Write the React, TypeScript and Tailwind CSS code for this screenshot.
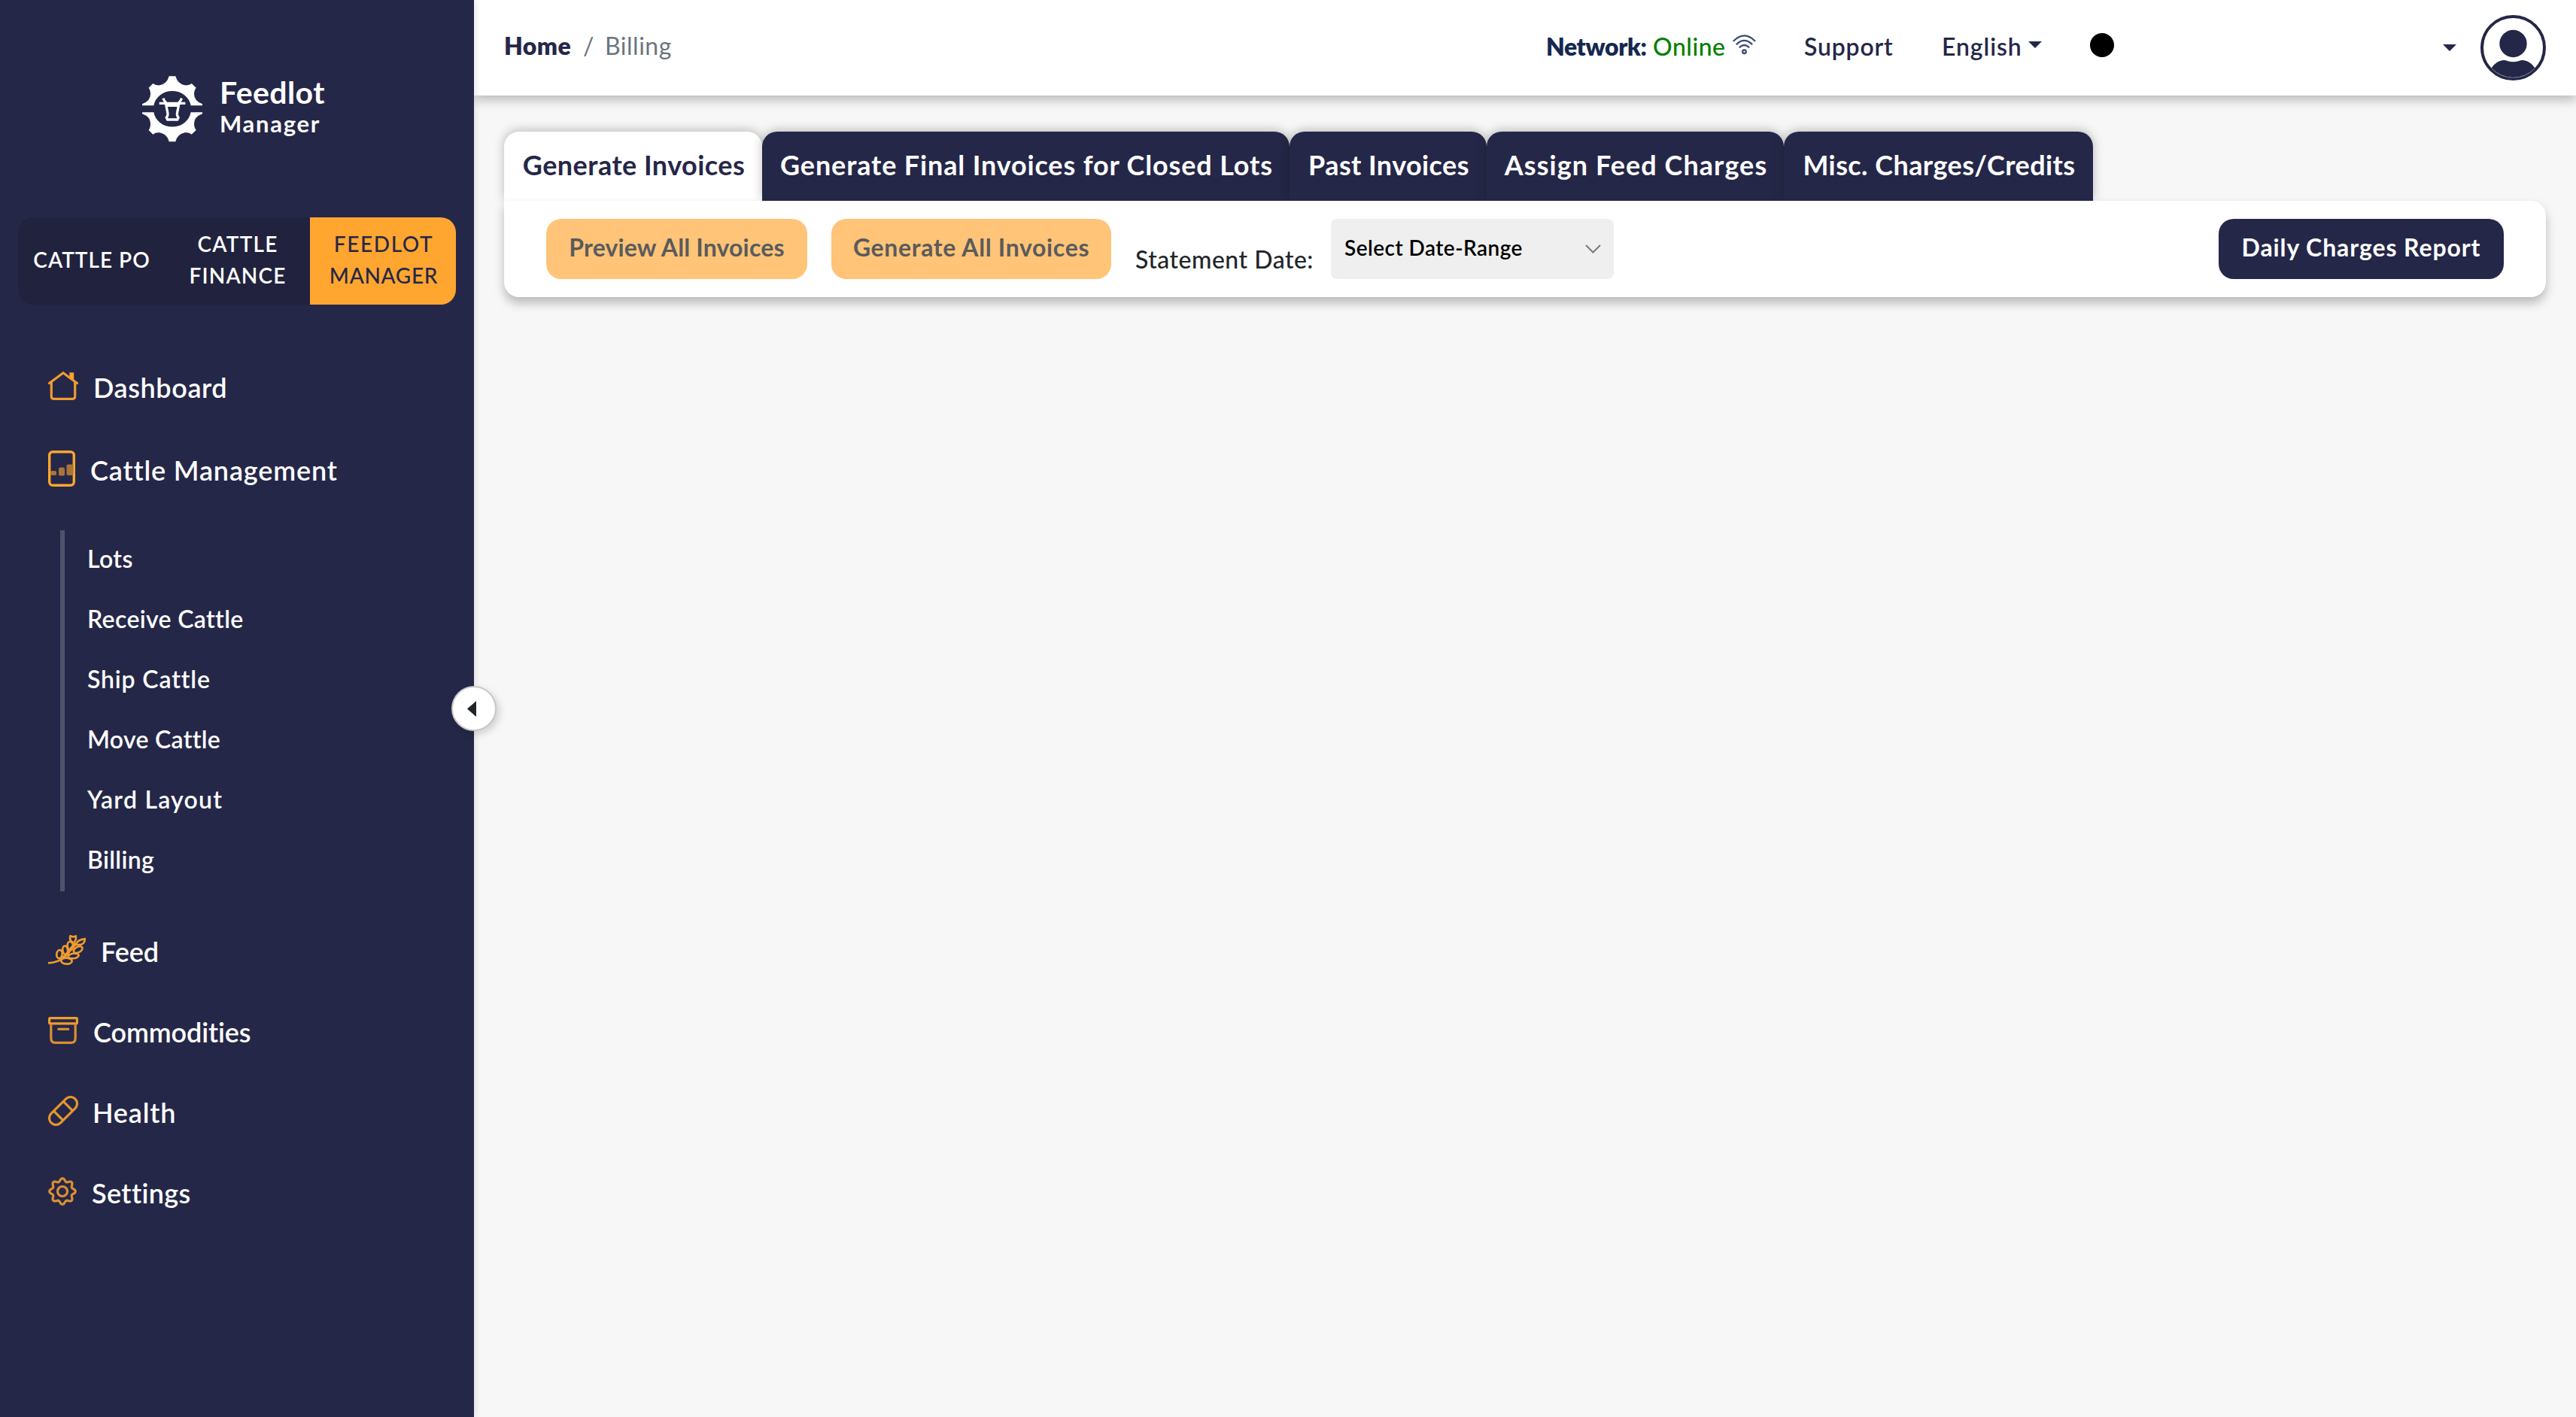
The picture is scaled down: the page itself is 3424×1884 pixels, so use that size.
import type { ReactNode } from "react";
import clsx from "clsx";

const ORANGE = "#ffa630";

function Logo() {
    const half =
        "M58 180V174Q91 162 91 135Q91 118 84 109L101 92Q112 101 128 99Q157 94 165 63H191Q199 94 228 99Q245 101 255 92L273 109Q265 118 265 135Q265 162 298 174V180H252A75 69 0 0 0 104 180Z";

    return (
        <div className="mt-[101px] ml-[189px] flex h-[88px] items-start text-white">
            <svg viewBox="58 62 240 264" className="h-[88px] w-[80px]" fill="#fff">
                <path d={half} />
                <path d={half} transform="matrix(1 0 0 -1 0 387)" />
                <g fill="none" stroke="#fff" strokeWidth="10">
                    <path d="M126 171H230M155 180H201" />
                    <path d="M142 151Q144 160 151 166L160 212Q161 220 155 228L159 236H198L202 228Q196 220 197 212L206 166Q213 160 215 151" />
                </g>
            </svg>
            <div className="ml-[23px] flex flex-col">
                <span className="h-[46px] text-[41px] leading-[44px] font-bold tracking-[0.4px]">Feedlot</span>
                <span className="h-[34px] text-[31px] leading-[34px] font-bold tracking-[1.7px]">Manager</span>
            </div>
        </div>
    );
}

function HomeIcon() {
    return (
        <svg viewBox="0 0 40 38" className="h-[38px] w-[40px]" fill="none" stroke="#ee9c30" strokeWidth="3.2">
            <path d="M1.6 15.5L20 1.8L38.4 15.5" strokeLinecap="round" />
            <path d="M4.3 14V33.3Q4.3 36.3 7.3 36.3H32.700Q35.700 36.3 35.700 33.3V14" />
            <path d="M29 2H33.5V12L29 8Z" fill={ORANGE} strokeWidth="1.5" />
        </svg>
    );
}

function CattleIcon() {
    return (
        <svg viewBox="0 0 36 48" className="h-[48px] w-[36px]" fill="none">
            <rect x="1.7" y="1.7" width="32.6" height="44.6" rx="4.5" stroke={ORANGE} strokeWidth="3.4" />
            <g fill="#a97438">
                <rect x="3" y="27" width="8" height="6" rx="2" />
                <rect x="14" y="22.5" width="8" height="11" rx="2" />
                <rect x="24.5" y="18.5" width="9" height="14.5" rx="2" />
            </g>
        </svg>
    );
}

function FeedIcon() {
    return (
        <svg viewBox="192 66 150 120" className="h-[40px] w-[50px]" fill="none" stroke="#ee9c30" strokeWidth="8">
            <path d="M192 178Q220 177 246 163" />
            <path d="M240 164Q262 152 272 136T304 100" strokeWidth="12" />
            <ellipse cx="237" cy="143" rx="11" ry="17" transform="rotate(8 237 143)" />
            <ellipse cx="260" cy="127" rx="10" ry="17" transform="rotate(-8 260 127)" />
            <ellipse cx="280" cy="110" rx="11" ry="17" transform="rotate(-6 280 110)" />
            <path d="M281 70Q274 86 291 98Q306 88 302 71Q292 76 281 70Z" />
            <ellipse cx="265" cy="170" rx="22" ry="12" transform="rotate(4 265 170)" />
            <ellipse cx="293" cy="150" rx="21" ry="10" transform="rotate(-8 293 150)" />
            <ellipse cx="311" cy="125" rx="19" ry="11" transform="rotate(-28 311 125)" />
            <path d="M303 104Q307 86 338 82Q339 100 324 104Q314 107 303 104Z" />
        </svg>
    );
}

function BoxIcon() {
    return (
        <svg viewBox="0 0 40 36" className="h-[36px] w-[40px]" fill="none" stroke="#d98f33" strokeWidth="3.2">
            <rect x="1.6" y="1.6" width="36.800" height="7.2" rx="1" stroke="#ee9c30" />
            <path d="M3.8 9V28.5Q3.8 34.3 9.5 34.3H30.5Q36.200 34.3 36.200 28.5V9" />
            <path d="M12.5 16.3H28" />
        </svg>
    );
}

function PillIcon() {
    return (
        <svg viewBox="-20 -20 40 40" className="size-[40px]" fill="none" stroke="#e5962f" strokeWidth="3.2">
            <g transform="rotate(-45)">
                <rect x="-22.5" y="-8.8" width="45" height="17.6" rx="8.8" />
                <path d="M-9 -8.8V8.8M9 -8.8V8.8" />
            </g>
        </svg>
    );
}

function GearIcon() {
    // eight soft teeth around the hub
    const points = Array.from({ length: 96 }, (_, i) => {
        const a = (i / 96) * Math.PI * 2;
        const r = 15.3 + 2 * Math.cos(8 * a);
        return `${(r * Math.cos(a)).toFixed(2)},${(r * Math.sin(a)).toFixed(2)}`;
    }).join(" ");

    return (
        <svg viewBox="-19 -19 38 38" className="size-[38px]" fill="none" stroke="#d98f33" strokeWidth="3.2">
            <polygon points={points} strokeLinejoin="round" />
            <circle r="6.5" />
        </svg>
    );
}

function WifiIcon() {
    return (
        <svg viewBox="0 0 31 27" className="h-[27px] w-[31px]" fill="none" stroke="#3c4b70" strokeWidth="2.3" strokeLinecap="round">
            <path d="M1.5 8.3Q15.5 -5.5 29.5 8.3" />
            <path d="M5.5 12.6Q15.5 3.2 25.5 12.6" />
            <path d="M9.5 16.7Q15.5 11.2 21.5 16.7" />
            <circle cx="15.5" cy="22.7" r="2.3" />
        </svg>
    );
}

function Avatar() {
    return (
        <svg viewBox="0 0 87 87" className="size-[87px] shrink-0" fill="#252748">
            <circle cx="43.5" cy="43.5" r="41.5" fill="none" stroke="#252748" strokeWidth="4" />
            <circle cx="43.5" cy="38" r="18.2" />
            <path d="M14.5 70.5Q20 61.5 30 60Q34 60 36.5 61.2Q43.5 63.5 50.5 61.2Q53 60 57 60Q67 61.5 72.5 70.5A39.5 39.5 0 0 1 14.5 70.5Z" />
            <path d="M15.5 71.5A39 39 0 0 0 71.5 71.5" fill="none" stroke="#8f90a3" strokeWidth="0.7" />
        </svg>
    );
}

function Caret({ className }: { className?: string }) {
    return (
        <svg viewBox="0 0 18 9" className={clsx("h-[9px] w-[18px] shrink-0", className)} fill="#252748">
            <path d="M0 0H18L9 9Z" />
        </svg>
    );
}

interface NavItemProps {
    icon: ReactNode;
    label: string;
    className: string;
}

function NavItem({ icon, label, className }: NavItemProps) {
    return (
        <a className={clsx("flex items-center pl-16 text-[36px] leading-[44px] font-semibold whitespace-nowrap text-white", className)}>
            {icon}
            <span className="pt-1">{label}</span>
        </a>
    );
}

const subItems = [
    { label: "Lots", className: "tracking-[0.4px]" },
    { label: "Receive Cattle", className: "tracking-[0.35px]" },
    { label: "Ship Cattle", className: "tracking-[0.85px]" },
    { label: "Move Cattle", className: "tracking-[0.3px]" },
    { label: "Yard Layout", className: "tracking-[1.25px]" },
    { label: "Billing", className: "tracking-[0.35px]" },
];

function Sidebar() {
    return (
        <aside className="relative z-20 flex w-[630px] shrink-0 flex-col bg-[#252748] shadow-[0_0_10px_rgba(0,0,0,0.15)]">
            <Logo />

            <div className="mx-6 mt-[100px] flex h-[116px] overflow-hidden rounded-[20px] bg-[#21223d] text-center text-[28px] leading-[42px] font-semibold text-white">
                <div className="flex flex-1 items-center justify-center pb-1 pl-0.5 tracking-[1px]">CATTLE PO</div>
                <div className="flex flex-1 flex-col items-center justify-center pb-1 pl-0.5 tracking-[1.2px]">
                    <span>CATTLE</span>
                    <span>FINANCE</span>
                </div>
                <div className="flex flex-1 flex-col items-center justify-center bg-[#ffa630] pb-1 pl-0.5 font-medium text-[#252748]">
                    <span className="tracking-[1.6px]">FEEDLOT</span>
                    <span className="tracking-[0.7px]">MANAGER</span>
                </div>
            </div>

            <nav className="mt-[53px] flex flex-col">
                <NavItem icon={<HomeIcon />} label="Dashboard" className="h-[110px] gap-[20px] tracking-[0.6px]" />
                <NavItem icon={<CattleIcon />} label="Cattle Management" className="h-[110px] gap-[20px] tracking-[0.85px]" />
                <div className="mt-[27px] ml-20 flex flex-col border-l-[6px] border-[#50526d] pl-[30px] text-[32px] font-semibold text-white">
                    {subItems.map((item) => (
                        <a key={item.label} className={clsx("flex h-20 items-center pb-1", item.className)}>
                            {item.label}
                        </a>
                    ))}
                </div>
                <NavItem icon={<FeedIcon />} label="Feed" className="mt-6 h-[107px] gap-[20px] tracking-[-0.1px]" />
                <NavItem icon={<BoxIcon />} label="Commodities" className="h-[107px] gap-[20px] tracking-[-0.1px]" />
                <NavItem icon={<PillIcon />} label="Health" className="h-[107px] gap-[19px] tracking-[0.8px]" />
                <NavItem icon={<GearIcon />} label="Settings" className="h-[107px] gap-[20px] tracking-[0.4px]" />
            </nav>

            <button
                type="button"
                className="absolute top-[912px] -right-[30px] flex size-[60px] items-center justify-center rounded-full border-2 border-[#c8c8c8] bg-white pr-1.5 shadow-[4px_4px_10px_rgba(0,0,0,0.15)]"
            >
                <svg viewBox="0 0 12 21" className="h-[21px] w-[12px]" fill="#212529">
                    <path d="M12 0V21L0 10.5Z" />
                </svg>
            </button>
        </aside>
    );
}

function Header() {
    return (
        <header className="relative z-10 flex h-[127px] items-center bg-white pr-10 pb-2 pl-10 text-[32px] whitespace-nowrap text-[#252748] shadow-[0_6px_14px_rgba(0,0,0,0.25)]">
            <div className="flex w-[1385px] shrink-0 items-center pt-0.5">
                <span className="w-[105px] font-extrabold tracking-[0.4px]">Home</span>
                <span className="w-[29px] text-[#6c757d]">/</span>
                <span className="tracking-[0.5px] text-[#6c757d]">Billing</span>
            </div>
            <span className="w-[142px] shrink-0 pt-1 font-extrabold tracking-[-0.4px] text-[#152850]">Network:</span>
            <span className="w-[106px] shrink-0 pt-1 font-medium tracking-[0.5px] text-[#008000]">Online</span>
            <WifiIcon />
            <span className="ml-[64px] w-[116px] shrink-0 pt-1 font-semibold tracking-[0.8px]">Support</span>
            <span className="ml-[67px] w-[112px] shrink-0 pt-1 font-semibold tracking-[0.9px]">English</span>
            <Caret className="ml-[3px]" />
            <span className="ml-[64px] size-[32px] shrink-0 rounded-full bg-black" />
            <Caret className="mt-2 ml-auto" />
            <div className="mt-2 ml-[32px]">
                <Avatar />
            </div>
        </header>
    );
}

const tabs = [
    { label: "Generate Invoices", className: "w-[343px] tracking-[0.45px]" },
    { label: "Generate Final Invoices for Closed Lots", className: "w-[701px] tracking-[0.85px]" },
    { label: "Past Invoices", className: "w-[262px] tracking-[0.4px]" },
    { label: "Assign Feed Charges", className: "w-[395px] tracking-[1.05px]" },
    { label: "Misc. Charges/Credits", className: "w-[411px] tracking-[0.4px]" },
];

export default function App() {
    return (
        <div className="flex h-[1884px] w-[3424px] overflow-hidden bg-[#f7f7f7] font-['Lato',sans-serif]">
            <Sidebar />
            <div className="flex min-w-0 flex-1 flex-col">
                <Header />
                <main className="px-10 pt-12">
                    <div className="flex">
                        {tabs.map((tab, i) => (
                            <div
                                key={tab.label}
                                className={clsx(
                                    "flex h-[92px] shrink-0 items-center justify-center rounded-t-[20px] pb-1 pl-0.5 text-[36px] font-bold whitespace-nowrap shadow-[0_-2px_14px_rgba(0,0,0,0.25)]",
                                    i === 0 ? "bg-white text-[#252748]" : "bg-[#252748] text-white",
                                    tab.className
                                )}
                            >
                                {tab.label}
                            </div>
                        ))}
                    </div>

                    <section className="relative flex h-[128px] items-center rounded-[20px] rounded-tl-none bg-white px-14 text-[32px] whitespace-nowrap shadow-[0_8px_14px_rgba(0,0,0,0.25)]">
                        <button type="button" className="flex h-20 w-[347px] items-center justify-center rounded-[20px] bg-[#ffc477] pb-1 font-bold tracking-[0.15px] text-[#5a5b5c]">
                            Preview All Invoices
                        </button>
                        <button type="button" className="ml-8 flex h-20 w-[372px] items-center justify-center rounded-[20px] bg-[#ffc477] pb-1 font-bold tracking-[0.65px] text-[#5a5b5c]">
                            Generate All Invoices
                        </button>
                        <label className="mt-7 ml-8 w-[260px] font-medium tracking-[0.5px] text-[#212529]">Statement Date:</label>
                        <div className="flex h-20 w-[376px] items-center justify-between rounded-lg bg-[#efefef] pr-[17px] pl-[18px] text-[28px] font-semibold tracking-[0.45px] text-black">
                            <span className="pb-1">Select Date-Range</span>
                            <svg viewBox="0 0 21 12" className="h-[12px] w-[21px]" fill="none" stroke="#777a80" strokeWidth="2">
                                <path d="M1 1L10.5 10.5L20 1" />
                            </svg>
                        </div>
                        <button type="button" className="ml-auto flex h-20 w-[379px] items-center justify-center rounded-[20px] bg-[#252748] pb-1 font-bold tracking-[0.9px] text-white">
                            Daily Charges Report
                        </button>
                    </section>
                </main>
            </div>
        </div>
    );
}
